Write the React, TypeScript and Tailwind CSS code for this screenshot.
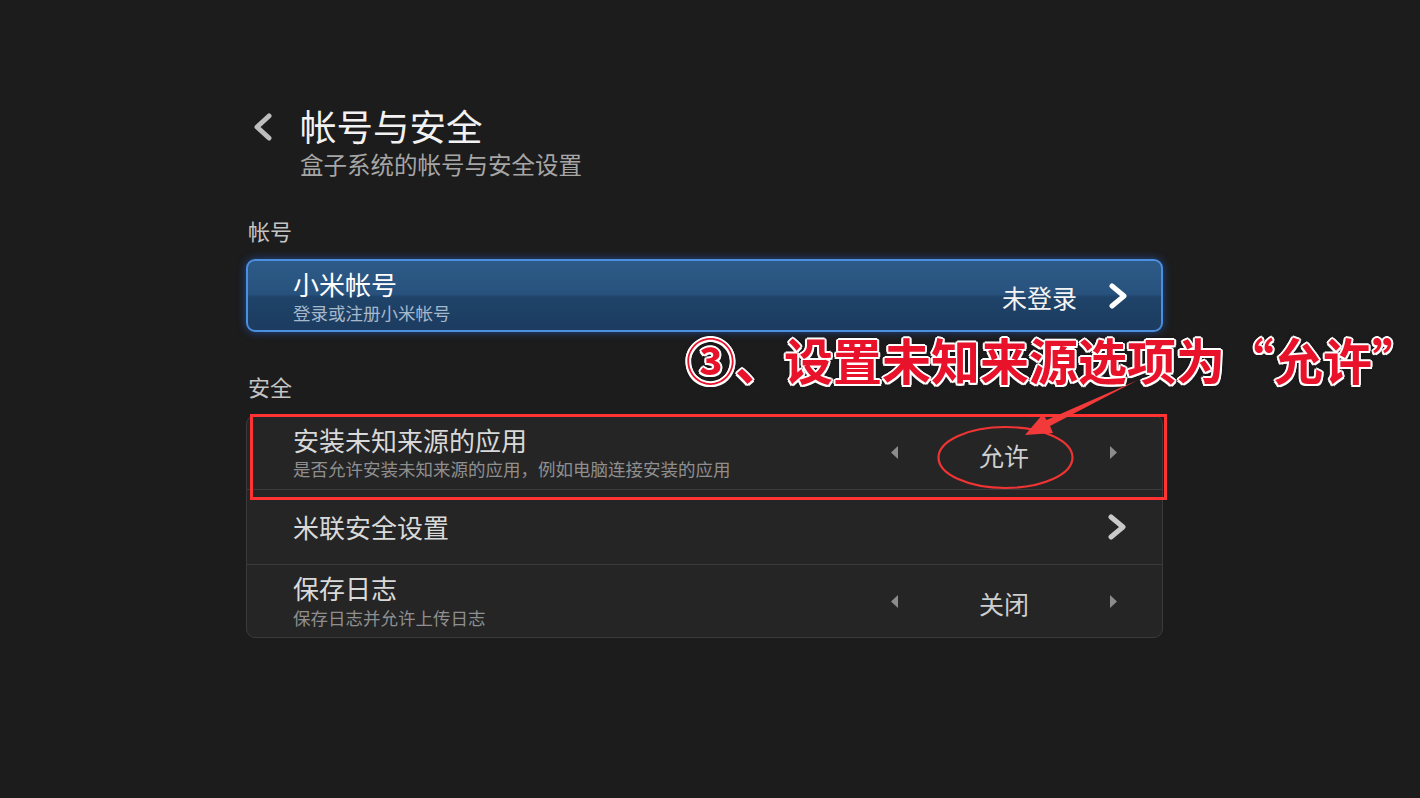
import React from "react";

function Tri({ dir }: { dir: "l" | "r" }) {
  return (
    <svg className="w-[7px] h-[13px] shrink-0" viewBox="0 0 7 13">
      {dir === "l" ? (
        <polygon points="7,0 0,6.5 7,13" fill="#8c8c8c" />
      ) : (
        <polygon points="0,0 7,6.5 0,13" fill="#8c8c8c" />
      )}
    </svg>
  );
}

function Chevron({ color }: { color: string }) {
  return (
    <svg className="w-[22px] h-[26px] shrink-0" viewBox="0 0 22 26">
      <polyline
        points="5,3 17,13 5,23"
        fill="none"
        stroke={color}
        strokeWidth="5"
        strokeLinecap="round"
        strokeLinejoin="round"
      />
    </svg>
  );
}

function Selector({ value }: { value: string }) {
  return (
    <div className="flex items-center gap-[26px] mr-[45px]">
      <Tri dir="l" />
      <div className="w-[160px] text-center text-[25px] leading-[30px] text-[#cfcfcf] mt-[4px]">{value}</div>
      <Tri dir="r" />
    </div>
  );
}

export default function App() {
  return (
    <div className="relative w-[1420px] h-[798px] overflow-hidden bg-[#1c1c1d] font-['Noto_Sans_CJK_SC',sans-serif]">
      <div className="w-[917px] ml-[246px] pt-[104px]">
        {/* Header */}
        <div className="flex">
          <svg className="ml-[4px] mt-[7px] w-[24px] h-[32px] shrink-0" viewBox="0 0 24 32">
            <polyline points="19,5 7,16 19,27" fill="none" stroke="#bdbdbd" strokeWidth="5" strokeLinecap="round" strokeLinejoin="round" />
          </svg>
          <div className="ml-[26px]">
            <div className="text-[36.5px] leading-[44px] text-[#f2f2f2]">帐号与安全</div>
            <div className="mt-[2px] text-[23.5px] leading-[28px] text-[#a6a6a6]">盒子系统的帐号与安全设置</div>
          </div>
        </div>

        {/* Account section */}
        <div className="mt-[38px] ml-[2px] text-[22px] leading-[28px] text-[#c4c4c4]">帐号</div>
        <div className="mt-[15px] h-[73px] rounded-[9px] border-2 border-[#4b8fe0] shadow-[0_0_8px_rgba(40,110,230,0.55)] bg-[linear-gradient(to_bottom,#2d5a87_0%,#28527e_48%,#1f4369_52%,#1c3c60_100%)] flex items-center">
          <div className="flex-1 pl-[45px] pt-[1px]">
            <div className="text-[26px] leading-[30px] text-[#ffffff]">小米帐号</div>
            <div className="mt-[3px] text-[17.5px] leading-[22px] text-[#a7b8cb]">登录或注册小米帐号</div>
          </div>
          <div className="text-[25px] leading-[30px] text-[#f4f4f4] mt-[2px]">未登录</div>
          <div className="ml-[30px] mr-[32px]">
            <Chevron color="#ffffff" />
          </div>
        </div>

        {/* Security section */}
        <div className="mt-[40px] ml-[2px] text-[22px] leading-[28px] text-[#c4c4c4]">安全</div>
        <div className="mt-[15px] rounded-[9px] border border-[#3a3a3a] bg-[#252526] overflow-hidden">
          <div className="h-[74px] flex items-center border-b border-[#3b3b3b]">
            <div className="flex-1 pl-[46px]">
              <div className="text-[26px] leading-[30px] text-[#d9d9d9]">安装未知来源的应用</div>
              <div className="mt-[3px] text-[17.5px] leading-[22px] text-[#8f8f8f]">是否允许安装未知来源的应用，例如电脑连接安装的应用</div>
            </div>
            <Selector value="允许" />
          </div>
          <div className="h-[75px] flex items-center border-b border-[#3b3b3b]">
            <div className="flex-1 pl-[46px] text-[26px] leading-[30px] text-[#d9d9d9]">米联安全设置</div>
            <div className="mr-[34px]">
              <Chevron color="#c9c9c9" />
            </div>
          </div>
          <div className="h-[72px] flex items-center">
            <div className="flex-1 pl-[46px]">
              <div className="text-[26px] leading-[30px] text-[#d9d9d9]">保存日志</div>
              <div className="mt-[4px] text-[17.5px] leading-[22px] text-[#8f8f8f]">保存日志并允许上传日志</div>
            </div>
            <Selector value="关闭" />
          </div>
        </div>
      </div>

      {/* Annotation overlay */}
      <svg className="absolute inset-0 pointer-events-none" width="1420" height="798" viewBox="0 0 1420 798">
        <rect x="251.5" y="415.5" width="914" height="83" fill="none" stroke="#ff3333" strokeWidth="3" />
        <ellipse cx="1005.5" cy="457.5" rx="67" ry="30.5" fill="none" stroke="#f03434" strokeWidth="2.2" />
        <polygon
          points="1025,435 1043,414 1046.5,420 1138,380 1050,426 1053,433"
          fill="#f23a3a"
        />
      </svg>
      <div className="absolute left-[686px] top-[331px] text-[49px] leading-[56px] font-bold text-[#e8132a] whitespace-nowrap font-['Noto_Sans_CJK_SC',sans-serif] [text-shadow:2px_0_#fff,-2px_0_#fff,0_2px_#fff,0_-2px_#fff,1.5px_1.5px_#fff,-1.5px_-1.5px_#fff,1.5px_-1.5px_#fff,-1.5px_1.5px_#fff,0_0_5px_rgba(0,0,0,0.7)]">
        ③、设置未知来源选项为“允许”
      </div>
    </div>
  );
}
